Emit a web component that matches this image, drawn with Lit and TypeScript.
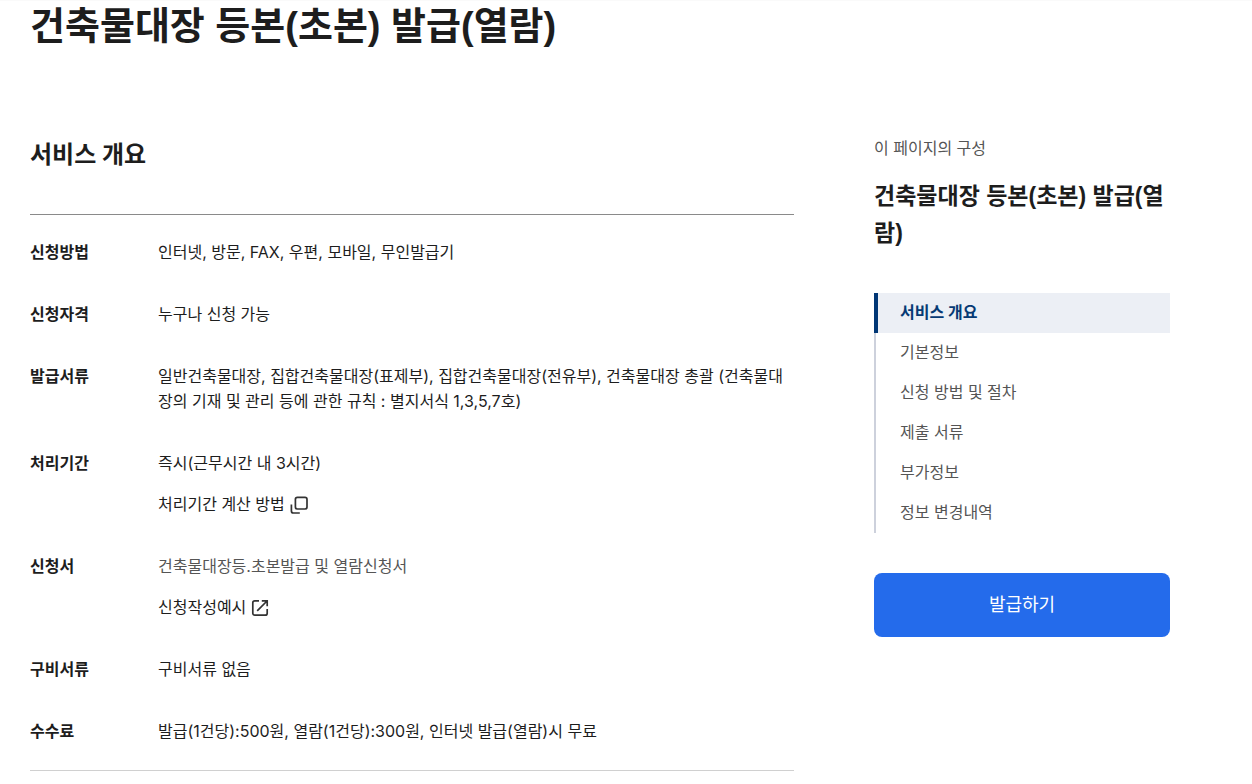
import { LitElement, html, css, nothing, type TemplateResult } from "lit";
import { customElement, property, state } from "lit/decorators.js";

const popupIcon = html`<svg class="icon" viewBox="0 0 20 20" aria-hidden="true">
  <rect x="6.4" y="2.4" width="11.6" height="11.6" rx="2" />
  <path d="M2.4 9.4v6.6a2 2 0 0 0 2 2h6.4" />
</svg>`;

const externalIcon = html`<svg class="icon" viewBox="0 0 20 20" aria-hidden="true">
  <path d="M9 2.8H4.8a2 2 0 0 0-2 2v10.4a2 2 0 0 0 2 2h10.4a2 2 0 0 0 2-2V11" />
  <path d="M11.8 2.8h5.4v5.4M17 3l-9.8 9.8" />
</svg>`;

interface Row {
  term: string;
  lines: (string | TemplateResult)[];
}

const rows: Row[] = [
  { term: "신청방법", lines: ["인터넷, 방문, FAX, 우편, 모바일, 무인발급기"] },
  { term: "신청자격", lines: ["누구나 신청 가능"] },
  {
    term: "발급서류",
    lines: [
      "일반건축물대장, 집합건축물대장(표제부), 집합건축물대장(전유부), 건축물대장 총괄 (건축물대장의 기재 및 관리 등에 관한 규칙 : 별지서식 1,3,5,7호)",
    ],
  },
  {
    term: "처리기간",
    lines: [
      "즉시(근무시간 내 3시간)",
      html`<button class="action" type="button">처리기간 계산 방법${popupIcon}</button>`,
    ],
  },
  {
    term: "신청서",
    lines: [
      html`<span class="muted">건축물대장등.초본발급 및 열람신청서</span>`,
      html`<a class="action" href="#example">신청작성예시${externalIcon}</a>`,
    ],
  },
  { term: "구비서류", lines: ["구비서류 없음"] },
  { term: "수수료", lines: ["발급(1건당):500원, 열람(1건당):300원, 인터넷 발급(열람)시 무료"] },
];

const sections = [
  "서비스 개요",
  "기본정보",
  "신청 방법 및 절차",
  "제출 서류",
  "부가정보",
  "정보 변경내역",
];

@customElement("service-overview")
export class ServiceOverview extends LitElement {
  static styles = css`
    :host {
      display: block;
    }
    .heading {
      margin: 0 0 40px;
      font-size: 24px;
      line-height: 38px;
      font-weight: 700;
    }
    .list {
      display: grid;
      gap: 37px;
      margin: 0;
      padding: 25px 0 26px;
      border-top: 1px solid #8a8a8a;
      border-bottom: 1px solid #d0d0d0;
      font-size: 16px;
      line-height: 25px;
    }
    .row {
      display: grid;
      grid-template-columns: 112px 1fr;
      gap: 16px;
    }
    .term {
      font-weight: 700;
    }
    .detail {
      display: grid;
      gap: 16px;
      justify-items: start;
      margin: 0;
    }
    .muted {
      color: #555;
    }
    .action {
      display: inline-flex;
      align-items: center;
      gap: 4px;
      padding: 0;
      border: 0;
      background: none;
      color: inherit;
      font: inherit;
      text-decoration: none;
      cursor: pointer;
    }
    .icon {
      width: 20px;
      height: 20px;
      fill: none;
      stroke: #333;
      stroke-width: 1.7;
    }
  `;

  render() {
    return html`
      <h2 class="heading">서비스 개요</h2>
      <dl class="list">
        ${rows.map(
          (row) => html`<div class="row">
            <dt class="term">${row.term}</dt>
            <dd class="detail">${row.lines.map((line) => html`<div>${line}</div>`)}</dd>
          </div>`
        )}
      </dl>
    `;
  }
}

@customElement("page-contents")
export class PageContents extends LitElement {
  static styles = css`
    :host {
      display: block;
    }
    .caption {
      margin: 0;
      color: #555;
      font-size: 16px;
      line-height: 25px;
    }
    .title {
      margin: 17px 0 41px;
      font-family: "Liberation Sans", "Noto Sans CJK KR", sans-serif;
      font-size: 23px;
      line-height: 37px;
      font-weight: 700;
      word-break: break-all;
    }
    .links {
      margin: 0;
      padding: 0;
      list-style: none;
    }
    .link {
      display: block;
      padding: 0 24px 2px;
      border-left: 2px solid #cdd1dc;
      color: #555;
      font-size: 16px;
      line-height: 38px;
      text-decoration: none;
    }
    .link[aria-current] {
      padding-left: 22px;
      border-left: 4px solid #003675;
      background: #eceff5;
      color: #063a74;
      font-weight: 700;
    }
    .issue {
      width: 100%;
      height: 64px;
      margin-top: 40px;
      padding: 0 0 4px;
      border: 0;
      border-radius: 8px;
      background: #246beb;
      color: #fff;
      font-family: inherit;
      font-size: 18px;
      cursor: pointer;
    }
  `;

  @property() heading = "";
  @state() private current = 0;

  render() {
    return html`
      <p class="caption">이 페이지의 구성</p>
      <h2 class="title">${this.heading}</h2>
      <nav aria-label="이 페이지의 구성">
        <ul class="links">
          ${sections.map(
            (name, i) => html`<li>
              <a
                class="link"
                href="#section-${i + 1}"
                aria-current=${i === this.current ? "true" : nothing}
                @click=${() => (this.current = i)}
                >${name}</a
              >
            </li>`
          )}
        </ul>
      </nav>
      <button class="issue" type="button">발급하기</button>
    `;
  }
}

@customElement("app-root")
export class AppRoot extends LitElement {
  static styles = css`
    :host {
      display: block;
      color: #1d1d1d;
      background: #fff;
      font-family: Inter, "Noto Sans CJK KR", sans-serif;
    }
    .page {
      padding: 0 82px 13px 30px;
      border-top: 1px solid #fafafa;
    }
    .title {
      margin: 0;
      font-family: "Liberation Sans", "Noto Sans CJK KR", sans-serif;
      font-size: 38px;
      line-height: 50px;
      font-weight: 700;
    }
    .columns {
      display: grid;
      grid-template-columns: minmax(0, 1fr) 296px;
      align-items: start;
      gap: 80px;
      padding-top: 85px;
    }
  `;

  render() {
    const title = "건축물대장 등본(초본) 발급(열람)";
    return html`
      <div class="page">
        <h1 class="title">${title}</h1>
        <div class="columns">
          <main><service-overview></service-overview></main>
          <aside><page-contents heading=${title}></page-contents></aside>
        </div>
      </div>
    `;
  }
}
